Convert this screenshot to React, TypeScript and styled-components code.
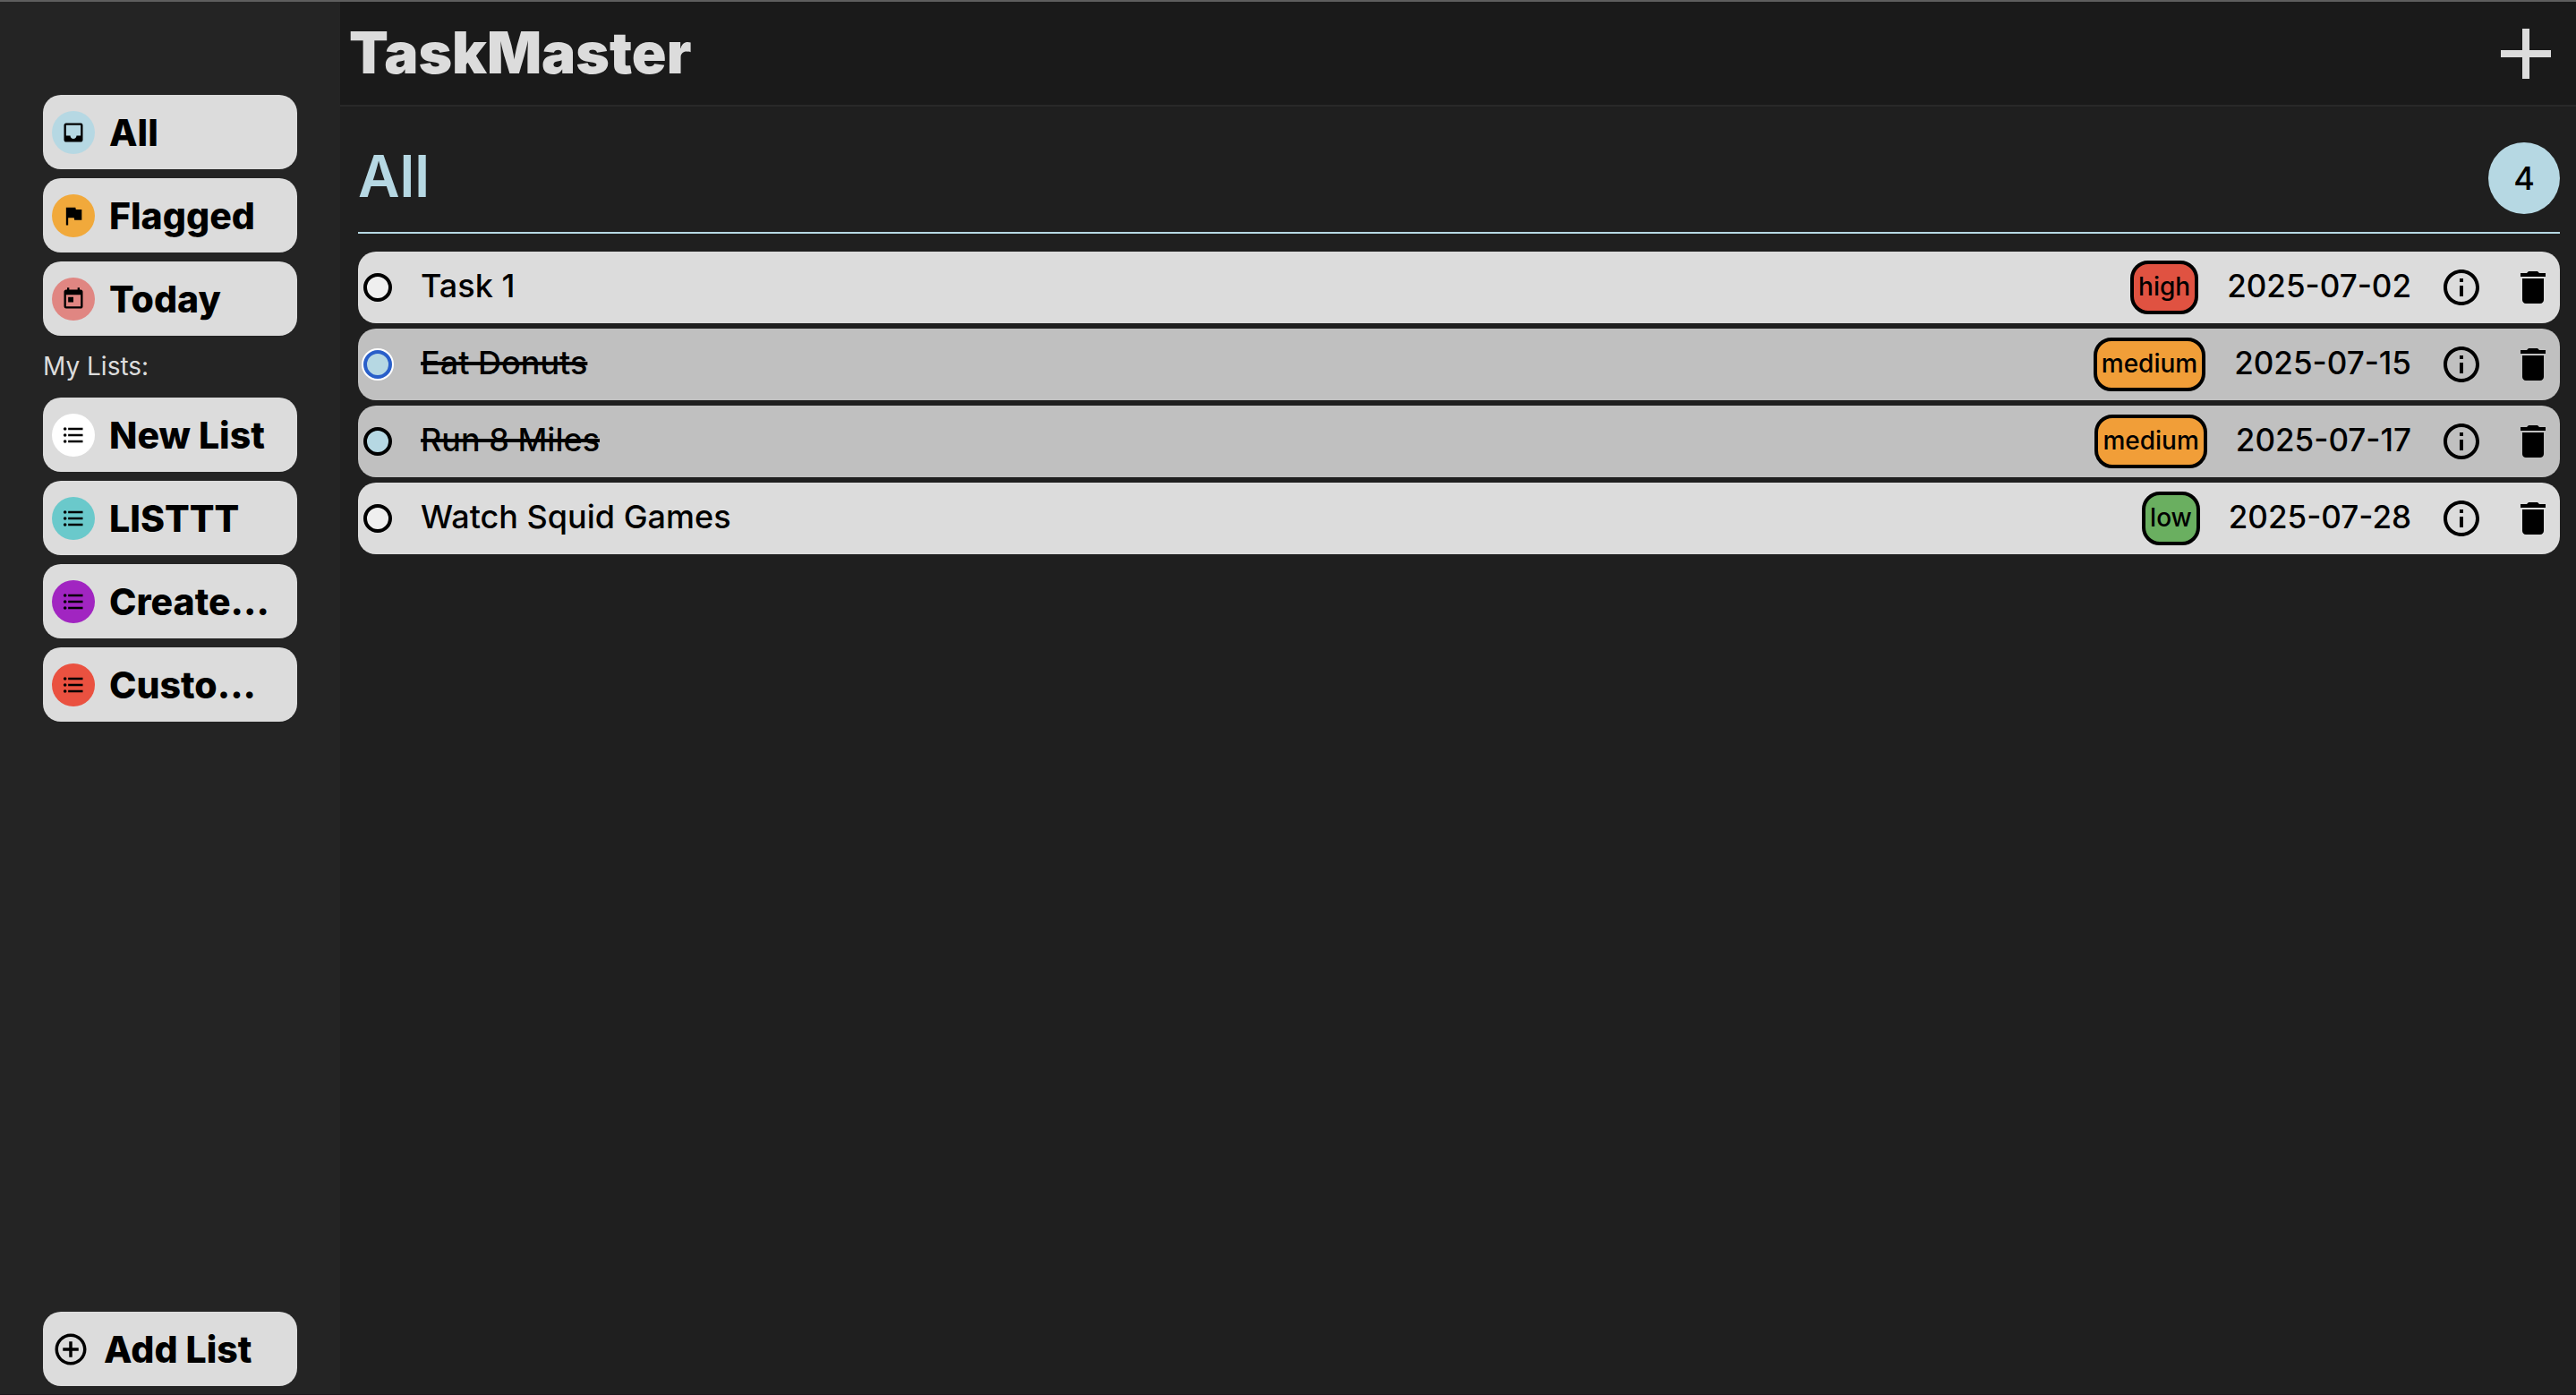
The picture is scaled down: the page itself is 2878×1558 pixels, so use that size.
import React, { useState } from 'react';
import styled, { createGlobalStyle } from 'styled-components';
import type { IconType } from 'react-icons';
import {
  MdAdd,
  MdAddCircleOutline,
  MdDelete,
  MdFlag,
  MdFormatListBulleted,
  MdInbox,
  MdInfoOutline,
  MdToday,
} from 'react-icons/md';

type Priority = 'high' | 'medium' | 'low';

interface Task {
  id: number;
  title: string;
  priority: Priority;
  due: string;
  done: boolean;
}

interface ListEntry {
  name: string;
  color: string;
  icon: IconType;
}

const smartLists: ListEntry[] = [
  { name: 'All', color: '#b6d8e3', icon: MdInbox },
  { name: 'Flagged', color: '#f1a93b', icon: MdFlag },
  { name: 'Today', color: '#e08682', icon: MdToday },
];

const customLists: ListEntry[] = [
  { name: 'New List', color: '#ffffff', icon: MdFormatListBulleted },
  { name: 'LISTTT', color: '#6ac9cb', icon: MdFormatListBulleted },
  { name: 'Create...', color: '#a125c1', icon: MdFormatListBulleted },
  { name: 'Custo...', color: '#ea5140', icon: MdFormatListBulleted },
];

const initialTasks: Task[] = [
  { id: 1, title: 'Task 1', priority: 'high', due: '2025-07-02', done: false },
  { id: 2, title: 'Eat Donuts', priority: 'medium', due: '2025-07-15', done: true },
  { id: 3, title: 'Run 8 Miles', priority: 'medium', due: '2025-07-17', done: true },
  { id: 4, title: 'Watch Squid Games', priority: 'low', due: '2025-07-28', done: false },
];

const priorityColors: Record<Priority, string> = {
  high: '#e05241',
  medium: '#f19e38',
  low: '#6aaf60',
};

const GlobalStyle = createGlobalStyle`
  *, *::before, *::after { box-sizing: border-box; }
  body {
    margin: 0;
    background: #1f1f1f;
    color: #000;
    font-family: Inter, "Liberation Sans", sans-serif;
  }
  button, input { font: inherit; color: inherit; }
`;

const Shell = styled.div`
  display: grid;
  grid-template-columns: 380px 1fr;
  min-height: 100vh;
  border-top: 2px solid #5e5e5e;
  border-bottom: 1px solid #1c161b;
`;

const Sidebar = styled.aside`
  display: flex;
  flex-direction: column;
  padding: 104px 48px 9px;
  background: #242424;
`;

const ListGroup = styled.nav`
  display: flex;
  flex-direction: column;
  gap: 10px;
`;

const GroupLabel = styled.h2`
  margin: 0;
  color: #dcdcdc;
  font-size: 28px;
  font-weight: 400;
  line-height: 69px;
`;

const ListButton = styled.button`
  display: flex;
  align-items: center;
  gap: 16px;
  width: 100%;
  height: 83px;
  padding: 0 10px;
  border: 0;
  border-radius: 20px;
  background: #dcdcdc;
  font-size: 41px;
  font-weight: 800;
  white-space: nowrap;
  cursor: pointer;
`;

const AddListButton = styled(ListButton)`
  margin-top: auto;
`;

const ListIcon = styled.span<{ $color: string }>`
  display: grid;
  place-items: center;
  flex: none;
  width: 48px;
  height: 48px;
  border-radius: 50%;
  background: ${(p) => p.$color};
  font-size: 28px;
`;

const Main = styled.div`
  display: flex;
  flex-direction: column;
  min-width: 0;
  background: #1f1f1f;
`;

const Header = styled.header`
  display: flex;
  align-items: center;
  justify-content: space-between;
  height: 117px;
  padding: 0 8px 0 10px;
  border-bottom: 2px solid #292929;
  background: #1a1a1a;
  color: #dcdcdc;
`;

const Brand = styled.h1`
  margin: 0;
  padding-bottom: 2px;
  font-size: 64px;
  font-weight: 900;
`;

const IconButton = styled.button<{ $size: number }>`
  display: grid;
  place-items: center;
  padding: 0;
  border: 0;
  background: none;
  font-size: ${(p) => p.$size}px;
  cursor: pointer;
`;

const Content = styled.main`
  padding: 40px 18px 20px 20px;
`;

const SectionHead = styled.div`
  display: flex;
  align-items: center;
  justify-content: space-between;
  padding-bottom: 20px;
  border-bottom: 2px solid #b6d8e3;
`;

const SectionTitle = styled.h2`
  margin: 0;
  padding-bottom: 4px;
  color: #b6d8e3;
  font-size: 64px;
  font-weight: 600;
  line-height: 76px;
`;

const Count = styled.span`
  display: grid;
  place-items: center;
  width: 80px;
  height: 80px;
  border-radius: 50%;
  background: #b6d8e3;
  font-size: 36px;
  font-weight: 500;
`;

const TaskList = styled.ul`
  display: flex;
  flex-direction: column;
  gap: 6px;
  margin: 20px 0 0;
  padding: 0;
  list-style: none;
`;

const TaskRow = styled.li<{ $done: boolean }>`
  display: flex;
  align-items: center;
  gap: 32px;
  height: 80px;
  padding: 0 6px;
  border-radius: 20px;
  background: ${(p) => (p.$done ? '#c0c0c0' : '#dcdcdc')};
`;

const Check = styled.input<{ $active: boolean }>`
  appearance: none;
  flex: none;
  width: 32px;
  height: 32px;
  margin: 0;
  border: 4px solid ${(p) => (p.$active ? '#295fc9' : '#000')};
  border-radius: 50%;
  outline: 0;
  background: #efefef;
  box-shadow: ${(p) => (p.$active ? '0 0 0 2px #fff' : 'none')};
  cursor: pointer;

  &:checked {
    background: #b6d8e3;
  }
`;

const TaskTitle = styled.label<{ $done: boolean }>`
  flex: 1;
  padding-bottom: 4px;
  font-size: 36px;
  font-weight: 500;
  text-decoration: ${(p) => (p.$done ? 'line-through 4px' : 'none')};
`;

const Badge = styled.span<{ $priority: Priority }>`
  padding: 0 5px 2px;
  border: 4px solid #000;
  border-radius: 20px;
  background: ${(p) => priorityColors[p.$priority]};
  font-size: 28px;
  font-weight: 500;
  line-height: 50px;
`;

const DueDate = styled.time`
  padding-bottom: 4px;
  font-size: 35px;
  font-weight: 500;
`;

function ListItem({ entry }: { entry: ListEntry }) {
  const Icon = entry.icon;
  return (
    <ListButton type="button">
      <ListIcon $color={entry.color}>
        <Icon aria-hidden />
      </ListIcon>
      {entry.name}
    </ListButton>
  );
}

export default function App() {
  const [tasks, setTasks] = useState(initialTasks);
  const [activeId, setActiveId] = useState(2);

  const toggle = (id: number) => {
    setActiveId(id);
    setTasks((all) => all.map((t) => (t.id === id ? { ...t, done: !t.done } : t)));
  };

  const remove = (id: number) => setTasks((all) => all.filter((t) => t.id !== id));

  return (
    <>
      <GlobalStyle />
      <Shell>
        <Sidebar>
          <ListGroup>
            {smartLists.map((entry) => (
              <ListItem key={entry.name} entry={entry} />
            ))}
          </ListGroup>
          <GroupLabel>My Lists:</GroupLabel>
          <ListGroup>
            {customLists.map((entry) => (
              <ListItem key={entry.name} entry={entry} />
            ))}
          </ListGroup>
          <AddListButton type="button">
            <MdAddCircleOutline size={42} aria-hidden />
            Add List
          </AddListButton>
        </Sidebar>
        <Main>
          <Header>
            <Brand>TaskMaster</Brand>
            <IconButton type="button" $size={96} aria-label="Add task">
              <MdAdd />
            </IconButton>
          </Header>
          <Content>
            <SectionHead>
              <SectionTitle>All</SectionTitle>
              <Count>{tasks.length}</Count>
            </SectionHead>
            <TaskList>
              {tasks.map((task) => (
                <TaskRow key={task.id} $done={task.done}>
                  <Check
                    id={`task-${task.id}`}
                    type="checkbox"
                    checked={task.done}
                    $active={task.id === activeId}
                    onChange={() => toggle(task.id)}
                  />
                  <TaskTitle htmlFor={`task-${task.id}`} $done={task.done}>
                    {task.title}
                  </TaskTitle>
                  <Badge $priority={task.priority}>{task.priority}</Badge>
                  <DueDate dateTime={task.due}>{task.due}</DueDate>
                  <IconButton type="button" $size={48} aria-label="Task details">
                    <MdInfoOutline />
                  </IconButton>
                  <IconButton
                    type="button"
                    $size={48}
                    aria-label="Delete task"
                    onClick={() => remove(task.id)}
                  >
                    <MdDelete />
                  </IconButton>
                </TaskRow>
              ))}
            </TaskList>
          </Content>
        </Main>
      </Shell>
    </>
  );
}
